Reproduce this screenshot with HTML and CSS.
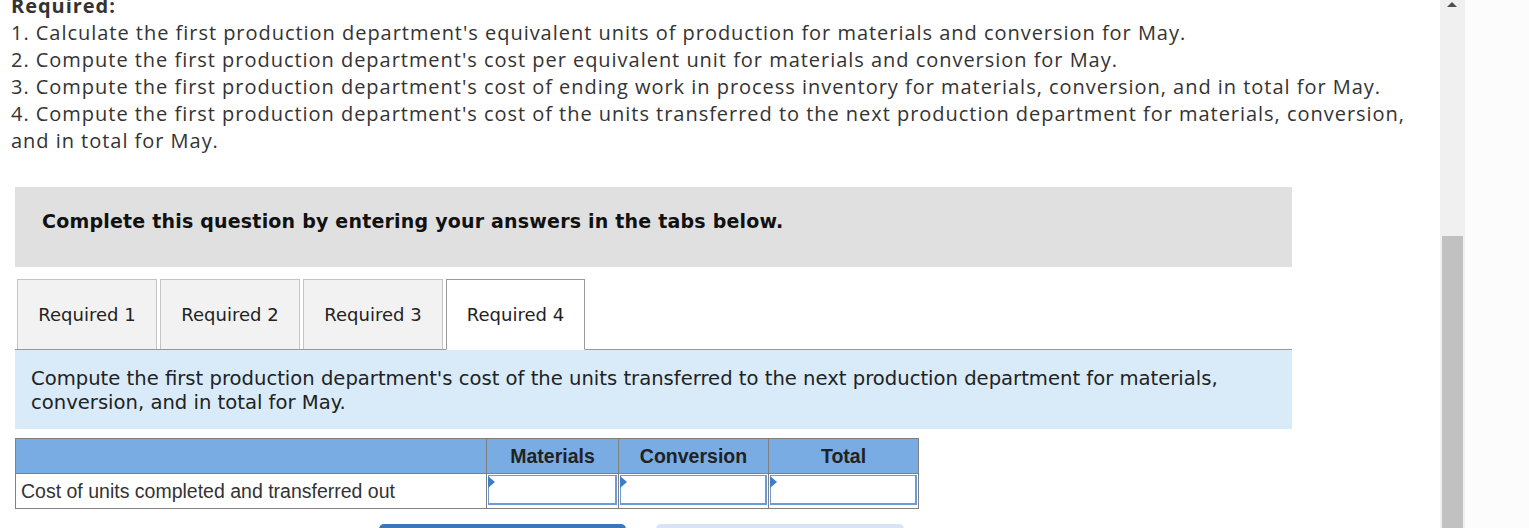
FILE: index.html
```html
<!DOCTYPE html>
<html lang="en">
<head>
<meta charset="utf-8">
<title>Required 4</title>
<link rel="stylesheet" href="styles.css">
</head>
<body>
<div class="page">
  <main class="content">
    <section class="required">
      <p class="req-title">Required:</p>
      <p>1. Calculate the first production department's equivalent units of production for materials and conversion for May.</p>
      <p>2. Compute the first production department's cost per equivalent unit for materials and conversion for May.</p>
      <p>3. Compute the first production department's cost of ending work in process inventory for materials, conversion, and in total for May.</p>
      <p>4. Compute the first production department's cost of the units transferred to the next production department for materials, conversion, and in total for May.</p>
    </section>

    <div class="notice">Complete this question by entering your answers in the tabs below.</div>

    <div class="tabs">
      <div class="tab">Required 1</div>
      <div class="tab">Required 2</div>
      <div class="tab">Required 3</div>
      <div class="tab tab-active">Required 4</div>
    </div>

    <div class="prompt">Compute the first production department's cost of the units transferred to the next production department for materials, conversion, and in total for May.</div>

    <table class="grid">
      <colgroup>
        <col class="c-label"><col class="c-mat"><col class="c-conv"><col class="c-tot">
      </colgroup>
      <thead>
        <tr><th></th><th>Materials</th><th>Conversion</th><th>Total</th></tr>
      </thead>
      <tbody>
        <tr>
          <td class="label">Cost of units completed and transferred out</td>
          <td class="cell"><div class="input"></div></td>
          <td class="cell"><div class="input"></div></td>
          <td class="cell"><div class="input"></div></td>
        </tr>
      </tbody>
    </table>

    <div class="actions">
      <div class="btn btn-prev"></div>
      <div class="btn btn-next"></div>
    </div>
  </main>
  <div class="scrollbar">
    <div class="arrow"></div>
    <div class="thumb"></div>
  </div>
  <div class="gutter"></div>
</div>
</body>
</html>
```

FILE: styles.css
```css
html, body {
  margin: 0;
  padding: 0;
  background: #ffffff;
  overflow: hidden;
}

.page {
  display: flex;
  width: 1529px;
  height: 528px;
  overflow: hidden;
}

.content {
  width: 1440px;
  flex: none;
}

.required {
  margin-top: -8px;
  padding-left: 11px;
  font-family: "Open Sans", "Liberation Sans", sans-serif;
  font-size: 20px;
  letter-spacing: 0.97px;
  line-height: 27px;
  color: #333333;
  width: 1412px;
}

.required p {
  margin: 0;
}

.req-title {
  font-weight: 700;
}

.notice {
  margin: 33px 0 0 15px;
  width: 1277px;
  height: 80px;
  box-sizing: border-box;
  padding: 22px 27px 0;
  background: #e0e0e0;
  font-family: "DejaVu Sans", Verdana, sans-serif;
  font-weight: 700;
  font-size: 19px;
  letter-spacing: 0.2px;
  line-height: 24px;
  color: #111111;
}

.tabs {
  margin: 12px 0 0 15px;
  width: 1277px;
  box-sizing: border-box;
  padding-left: 2px;
  display: flex;
  gap: 3px;
  border-bottom: 1px solid #999999;
  height: 71px;
}

.tab {
  width: 140px;
  height: 70px;
  box-sizing: border-box;
  border: 1px solid #c4c4c4;
  border-bottom: none;
  background: #f2f2f2;
  display: flex;
  align-items: center;
  justify-content: center;
  font-family: "DejaVu Sans", Verdana, sans-serif;
  font-size: 18px;
  color: #222222;
}

.tab-active {
  width: 139px;
  height: 71px;
  margin-bottom: -1px;
  background: #ffffff;
  border-color: #999999;
  border-bottom: 1px solid #ffffff;
}

.prompt {
  margin-left: 15px;
  width: 1277px;
  height: 79px;
  box-sizing: border-box;
  padding: 17px 40px 0 16px;
  background: #d9ebf9;
  font-family: "DejaVu Sans", Verdana, sans-serif;
  font-size: 19.6px;
  line-height: 24px;
  color: #222222;
}

.grid {
  margin: 9px 0 0 15px;
  width: 903px;
  border-collapse: collapse;
  table-layout: fixed;
  font-family: "Liberation Sans", Arial, sans-serif;
  font-size: 19.5px;
  color: #333333;
}

.c-label { width: 471px; }
.c-mat { width: 132px; }
.c-conv { width: 150px; }
.c-tot { width: 150px; }

.grid th, .grid td {
  border: 1px solid #808080;
  padding: 0;
}

.grid th {
  height: 34px;
  background: #79ace3;
  font-weight: 700;
  color: #222222;
  text-align: center;
  vertical-align: middle;
}

.grid td {
  height: 32px;
  line-height: 22px;
}

.grid td.label {
  padding-left: 5px;
  text-align: left;
  vertical-align: middle;
}

.grid td.cell {
  padding: 1px;
  vertical-align: top;
}

.input {
  position: relative;
  height: 30px;
  box-sizing: border-box;
  border: 2px solid #6b9ad6;
  border-top-width: 1px;
  border-left-width: 1px;
  background: #ffffff;
}

.input::before {
  content: "";
  position: absolute;
  left: -1px;
  top: 0;
  border-style: solid;
  border-width: 6px 0 6px 7px;
  border-color: transparent transparent transparent #3f7ec6;
}

.actions {
  display: flex;
  gap: 30px;
  margin: 15px 0 0 379px;
}

.btn {
  width: 247px;
  height: 30px;
  border-radius: 5px 5px 0 0;
}

.btn-prev {
  background: #3a76b9;
}

.btn-next {
  width: 248px;
  background: #d8e4f3;
}

.scrollbar {
  position: relative;
  width: 25px;
  flex: none;
  background: #f0f0f0;
  height: 528px;
}

.arrow {
  position: absolute;
  left: 7px;
  top: 2px;
  width: 0;
  height: 0;
  border-left: 5px solid transparent;
  border-right: 5px solid transparent;
  border-bottom: 5px solid #505050;
}

.thumb {
  position: absolute;
  left: 2px;
  top: 236px;
  width: 21px;
  bottom: 0;
  background: #c1c1c1;
}

.gutter {
  flex: 1;
  background: #fcfcfc;
}
```
